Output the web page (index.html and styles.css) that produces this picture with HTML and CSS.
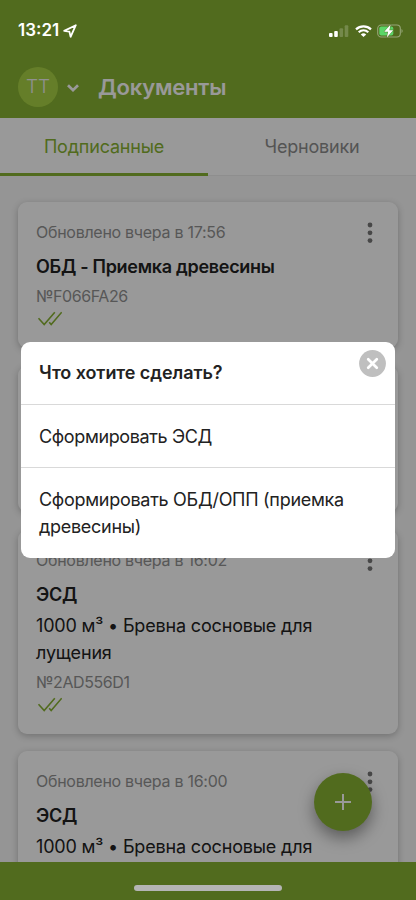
FILE: index.html
```html
<!DOCTYPE html>
<html lang="ru">
<head>
<meta charset="utf-8">
<meta name="viewport" content="width=device-width, initial-scale=1">
<title>Документы</title>
<link rel="stylesheet" href="styles.css">
</head>
<body>
<svg width="0" height="0" class="defs">
  <symbol id="dots" viewBox="0 0 6 22"><circle cx="3" cy="3" r="2.4"/><circle cx="3" cy="10.8" r="2.4"/><circle cx="3" cy="18.6" r="2.4"/></symbol>
  <symbol id="checks" viewBox="0 0 26 16"><path d="M2.5 7.2 8.2 13.6 18.8 1.2M13.2 11.2l2 2.4L25.7 1.2" fill="none" stroke="currentColor" stroke-width="1.6"/></symbol>
</svg>
<div class="screen">
  <header class="header">
    <div class="avatar">ТТ</div>
    <svg class="chevron" viewBox="0 0 14 10"><path d="M2 2.2 7 7.2 12 2.2" fill="none" stroke="currentColor" stroke-width="2.7"/></svg>
    <h1 class="title">Документы</h1>
  </header>
  <nav class="tabs">
    <div class="tab active"><span>Подписанные</span></div>
    <div class="tab"><span>Черновики</span></div>
  </nav>
  <main class="list">
    <article class="card">
      <div class="top"><span class="meta">Обновлено вчера в 17:56</span><svg class="dots"><use href="#dots"/></svg></div>
      <h2 class="name">ОБД - Приемка древесины</h2>
      <p class="number">№F066FA26</p>
      <svg class="checks"><use href="#checks"/></svg>
    </article>
    <article class="card covered"></article>
    <article class="card">
      <div class="top"><span class="meta">Обновлено вчера в 16:02</span><svg class="dots"><use href="#dots"/></svg></div>
      <h2 class="name">ЭСД</h2>
      <p class="goods">1000 м³ • Бревна сосновые для<br>лущения</p>
      <p class="number">№2AD556D1</p>
      <svg class="checks"><use href="#checks"/></svg>
    </article>
    <article class="card last">
      <div class="top"><span class="meta">Обновлено вчера в 16:00</span><svg class="dots"><use href="#dots"/></svg></div>
      <h2 class="name">ЭСД</h2>
      <p class="goods">1000 м³ • Бревна сосновые для</p>
    </article>
  </main>
  <footer class="footer"></footer>
  <div class="fab"><svg viewBox="0 0 16 16"><path d="M8 0v16M0 8h16" stroke="currentColor" stroke-width="2"/></svg></div>
  <div class="backdrop"></div>
  <div class="status">
    <span class="time">13:21</span>
    <svg class="arrow" viewBox="0 0 14 14"><path d="M1.2 6.9 12.8 1.2 7.6 12.8 6.4 7.6Z" fill="none" stroke="currentColor" stroke-width="1.8" stroke-linejoin="round"/></svg>
    <svg class="signal" viewBox="0 0 20 12"><rect x="0" y="8" width="3.6" height="4" rx="1"/><rect x="5.2" y="6" width="3.6" height="6" rx="1"/><g opacity=".2"><rect x="10.5" y="3.2" width="3.6" height="8.8" rx="1"/><rect x="15.7" y="0.3" width="3.6" height="11.7" rx="1"/></g></svg>
    <svg class="wifi" viewBox="0 0 17 12"><path d="M1 4.4C5.2.4 11.8.4 16 4.4M3.7 7.3c2.8-2.5 6.8-2.5 9.6 0" fill="none" stroke="currentColor" stroke-width="2.2"/><path d="M5.8 9.4a4 4 0 0 1 5.4 0L8.5 12Z"/></svg>
    <svg class="battery" viewBox="0 0 26 14"><rect x=".7" y="1" width="22.6" height="12" rx="3.5" fill="none" stroke="#fff" stroke-opacity=".4" stroke-width="1.1"/><rect x="2.3" y="2.6" width="14" height="8.8" rx="2" fill="#5bd567"/><path d="M24.6 5v4c1.2-.6 1.2-3.4 0-4Z" opacity=".5"/><path d="M13.6.6 7.2 7.8h3.9l-1.3 5.6 6.4-7.2h-3.8Z" stroke="#526b1e" stroke-width=".8" paint-order="stroke"/></svg>
  </div>
  <div class="home"></div>
  <section class="modal">
    <h2 class="question">Что хотите сделать?</h2>
    <div class="option first">Сформировать ЭСД</div>
    <div class="option">Сформировать ОБД/ОПП (приемка<br>древесины)</div>
    <svg class="close" viewBox="0 0 27 27"><circle cx="13.5" cy="13.5" r="13.4" fill="#bfbfbf"/><path d="m9.2 9.2 8.6 8.6M17.8 9.2l-8.6 8.6" stroke="#fff" stroke-width="2.7" stroke-linecap="round"/></svg>
  </section>
</div>
</body>
</html>
```
FILE: styles.css
```css
* { box-sizing: border-box; margin: 0; }
body { font-family: Inter, "Liberation Sans", sans-serif; }
.defs { position: absolute; }
.screen { position: relative; width: 416px; height: 900px; overflow: hidden; background: #f8f8f8; display: flex; flex-direction: column; }
.header { flex: none; height: 118px; padding: 67px 18px 0; background: #88b232; display: flex; align-items: flex-start; color: #fff; }
.avatar { width: 40px; height: 40px; border-radius: 50%; background: #a8d345; color: #f0f0f0; font-size: 19px; font-weight: 300; line-height: 40px; text-align: center; }
.chevron { width: 14px; height: 10px; margin: 16px 18px 0 8px; color: #fff; }
.title { font-size: 22px; font-weight: 600; line-height: 40px; letter-spacing: -.2px; }
.tabs { flex: none; height: 58px; background: #fff; display: flex; }
.tab { flex: 1; text-align: center; font-size: 18px; line-height: 58px; color: #8d8d8d; letter-spacing: -.2px; border-bottom: 1px solid #ededed; }
.tab.active { color: #88b232; border-bottom: 3px solid #88b232; }
.list { flex: 1; min-height: 0; overflow: hidden; padding: 26px 18px 0; display: flex; flex-direction: column; gap: 18px; }
.card { flex: none; padding: 18px 18px 20px; border-radius: 9px; background: #fff; box-shadow: 0 2px 7px rgba(0,0,0,.24); }
.covered { height: 146px; }
.last { height: 203px; }
.card:nth-child(n+3) { margin-top: -.5px; }
.top { display: flex; justify-content: space-between; height: 24px; }
.meta, .number { font-size: 16px; line-height: 24px; color: #929292; letter-spacing: -.28px; }
.dots { width: 6px; height: 22px; margin: 2px 7px 0 0; fill: #777; }
.name { font-size: 18px; font-weight: 600; line-height: 26px; margin-top: 10px; color: #222; letter-spacing: -.29px; }
.goods { font-size: 18px; line-height: 27px; margin-top: 4px; color: #222; letter-spacing: -.17px; }
.number { margin-top: 4px; letter-spacing: -.42px; }
.checks { display: block; width: 26px; height: 16px; margin-top: 3px; margin-bottom: 1px; color: #88b232; }
.footer { flex: none; height: 38px; background: #88b232; }
.fab { position: absolute; left: 314px; top: 773px; width: 58px; height: 58px; border-radius: 50%; background: #88b232; color: #fff; display: flex; align-items: center; justify-content: center; box-shadow: 0 7px 16px rgba(0,0,0,.4); }
.fab svg { width: 16px; height: 16px; }
.backdrop { position: absolute; inset: 0; background: rgba(0,0,0,.4); }
.status { position: absolute; left: 0; top: 20px; width: 100%; height: 21px; padding: 0 13px 0 18px; display: flex; align-items: center; color: #fff; fill: #fff; }
.time { font-size: 17px; font-weight: 600; line-height: 21px; }
.arrow { width: 14px; height: 14px; margin-left: 4px; }
.signal { width: 20px; height: 12px; margin-left: auto; }
.wifi { width: 17px; height: 12px; margin: 0 5px 0 6px; }
.battery { width: 26px; height: 14px; }
.home { position: absolute; left: 134px; top: 885px; width: 148px; height: 6px; border-radius: 3px; background: #b5b5b5; }
.modal { position: absolute; left: 21px; top: 342px; width: 374px; height: 216px; border-radius: 9px; background: #fff; color: #222; overflow: hidden; }
.question { font-size: 18px; font-weight: 600; line-height: 62px; height: 63px; padding: 0 18px; border-bottom: 1px solid #d9d9d9; letter-spacing: -.07px; }
.option { font-size: 18px; line-height: 27px; padding: 18px; letter-spacing: -.28px; }
.first { height: 63px; border-bottom: 1px solid #d9d9d9; letter-spacing: -.37px; }
.close { position: absolute; right: 9px; top: 8px; width: 27px; height: 27px; }
```
